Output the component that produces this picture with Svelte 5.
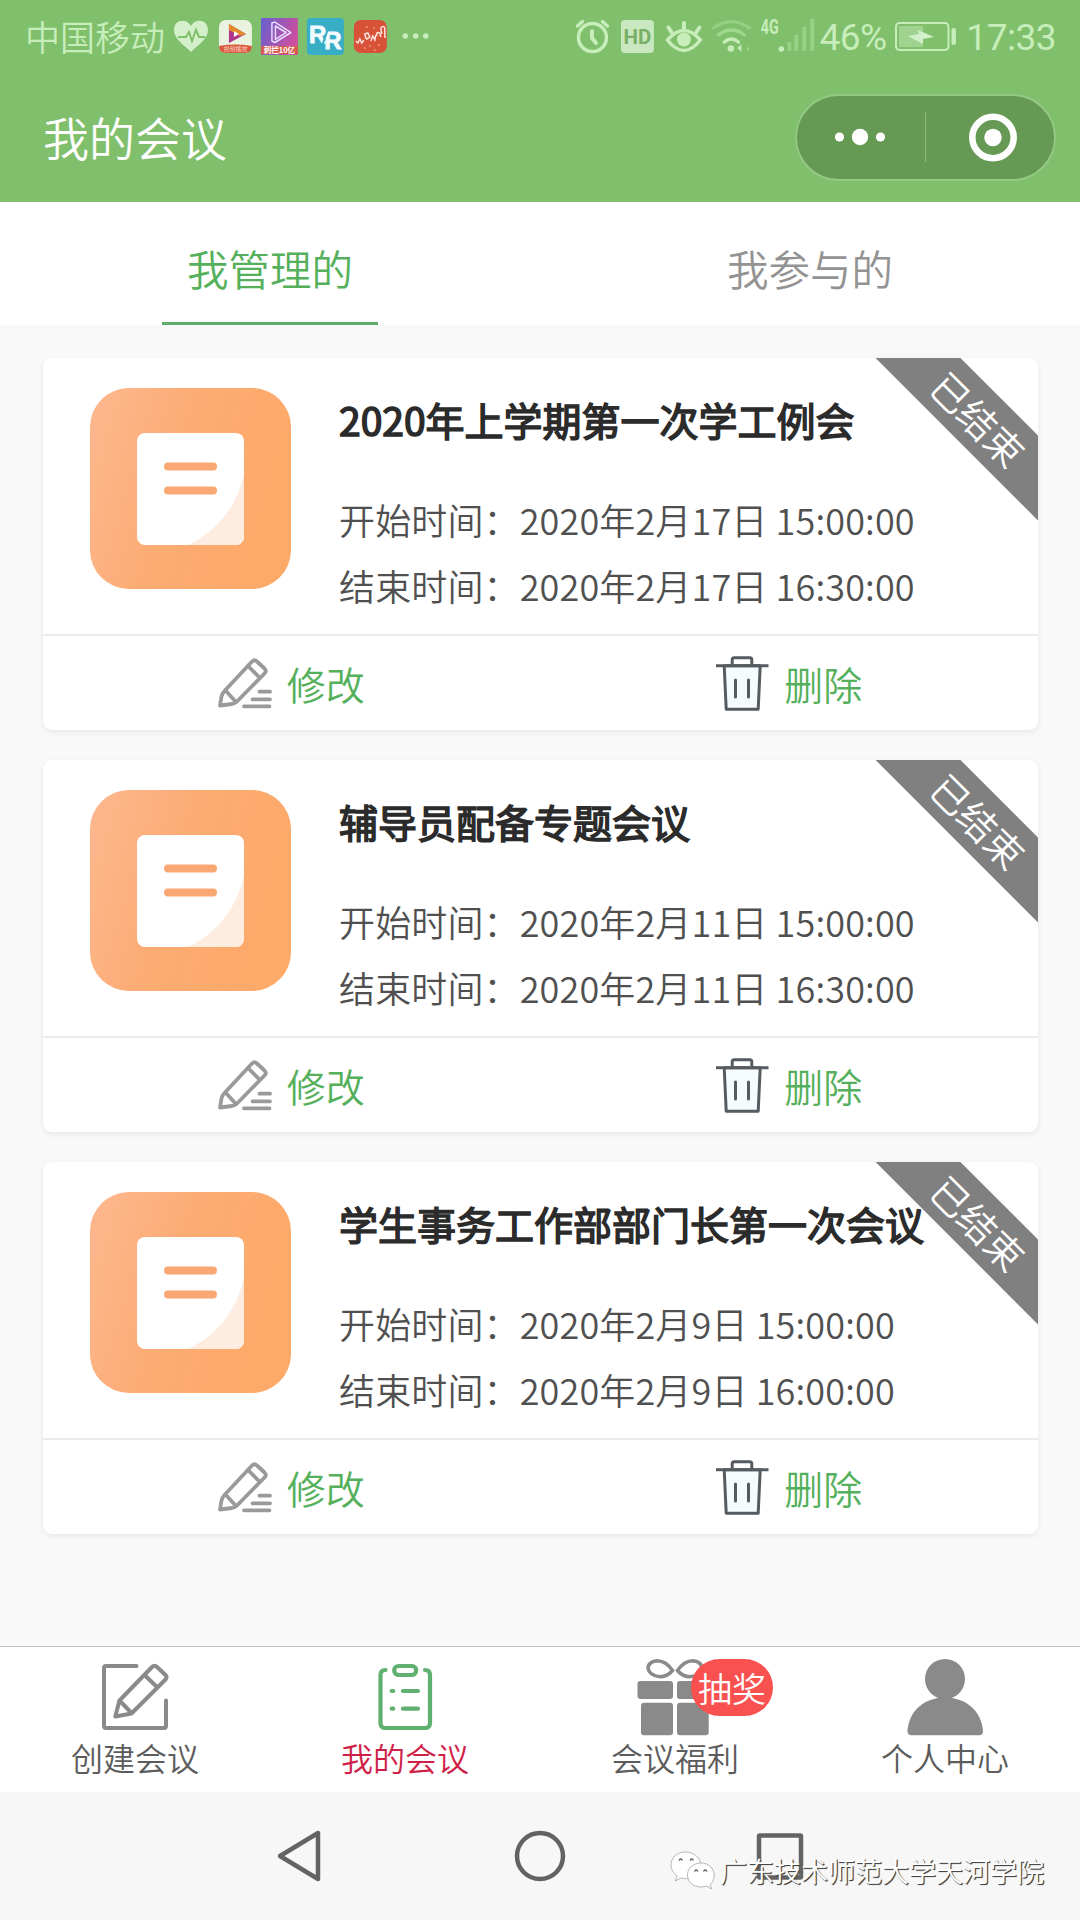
<script lang="ts">
	type Meeting = { title: string, start: string, end: string };

	const tabs = ["我管理的", "我参与的"];
	let activeTab: number = $state(0);

	let meetings: Meeting[] = $state([
		{ title: "2020年上学期第一次学工例会", start: "2020年2月17日 15:00:00", end: "2020年2月17日 16:30:00" },
		{ title: "辅导员配备专题会议", start: "2020年2月11日 15:00:00", end: "2020年2月11日 16:30:00" },
		{ title: "学生事务工作部部门长第一次会议", start: "2020年2月9日 15:00:00", end: "2020年2月9日 16:00:00" }
	]);

	function remove(meeting: Meeting) {
		meetings = meetings.filter(m => m !== meeting);
	}
</script>

<div class="screen">
	<header>
		<div class="status">
			<span class="carrier">中国移动</span>
			<svg class="notifications" width="264" height="48" viewBox="170 12 264 48">
				<path d="M191 52C183 44 174 39 174 30c0-11 13-12 17-4 4-8 17-7 17 4 0 9-9 14-17 22z" fill="#d3f0cb"/>
				<path d="M178 37h8l3-5 3 9 4-11 3 7h6" fill="none" stroke="#80bf6b" stroke-width="2"/>
				<!-- video app -->
				<rect x="219" y="20" width="33" height="33" rx="7" fill="#e9f3e0"/>
				<path d="M219 46q16-3 33 0q0 7-7 7h-19q-7 0-7-7z" fill="#d8583c"/>
				<path d="M229 24l17 10-17 9z" fill="#b0358c"/>
				<path d="M229 24l17 10-6 2-11-6z" fill="#e58a2a"/>
				<path d="M234 31l5 3-5 3z" fill="#fff"/>
				<text x="235.500" y="51.500" font-size="6" text-anchor="middle" fill="#fbd9cf">視頻播放</text>
				<!-- player -->
				<rect x="261" y="18" width="37" height="37" rx="1" fill="url(#player)"/>
				<path d="M261 46h37v8h-37z" fill="#d65a4c"/>
				<path d="M272 23l3-1 16 10.500-16 10-3-1.500zM275.500 26l10.500 6.500-10.500 7z" fill="none" stroke="#e6dcff" stroke-width="1.500" stroke-linejoin="round"/>
				<text x="279.500" y="53" font-size="7.500" font-weight="bold" text-anchor="middle" fill="#fff">刺拦10亿</text>
				<!-- RR -->
				<rect x="307" y="18" width="37" height="37" rx="4" fill="#38adc6"/>
				<g font-family="Liberation Sans, sans-serif" font-weight="bold" font-size="24" fill="#f2fbff" stroke="#f2fbff" stroke-width="0.800">
					<text x="309" y="43">R</text>
					<text x="324.500" y="49">R</text>
				</g>
				<path d="M331 21l-11 31" stroke="#38adc6" stroke-width="2"/>
				<rect x="354" y="20" width="33" height="33" rx="7" fill="#d8523a"/>
				<path d="M356 41l2 2 2-4 2 4 2-3M366 38l-1-4 3-1 2 4-3 2zM371 41l2-5 2 4 1-5M377 36q-1-5 3-3l1 4M382 34l-1-6q3-3 4 0v10" fill="none" stroke="#fce4dc" stroke-width="1.500"/>
				<path d="M364 48h2m3-2h2m3 4h2m2-5h2m-14-18h2m5 1h2" stroke="#ee9a6a" stroke-width="1.500"/>
				<g fill="#c6edba">
					<circle cx="405.500" cy="36" r="2.800"/>
					<circle cx="416" cy="36" r="2.800"/>
					<circle cx="426" cy="36" r="2.800"/>
				</g>
				<defs>
					<linearGradient id="player" x1="0" y1="0" x2="1" y2="0.400">
						<stop offset="0" stop-color="#6460cf"/>
						<stop offset="1" stop-color="#cd4fa0"/>
					</linearGradient>
				</defs>
			</svg>
			<svg class="signals" width="246" height="48" viewBox="574 12 246 48" fill="none" stroke="#c6edba" stroke-linecap="round">
				<circle cx="592.500" cy="37.500" r="14" stroke-width="3.500"/>
				<path d="M592 31v7l4 5" stroke-width="4"/>
				<path d="M577.500 26l5-4.500M607.500 26l-5-4.500" stroke-width="3.500"/>
				<rect x="621" y="20" width="33" height="33" rx="4" fill="#c9e8bf" stroke="none"/>
				<text x="637.500" y="44" font-family="Roboto, sans-serif" font-size="20.500" font-weight="bold" text-anchor="middle" fill="#78ae67" stroke="none">HD</text>
				<path d="M667.500 40q16.500-19 33 0q-16.500 21-33 0z" stroke-width="3.500"/>
				<circle cx="684" cy="39.500" r="7" fill="#c6edba" stroke="none"/>
				<path d="M684 23v6M668.500 27.500l3 4.500M699.500 27.500l-3 4.500" stroke-width="4"/>
				<path d="M713.500 28q18-13 36 0" stroke="#96d182" stroke-width="3.200"/>
				<path d="M718.500 35q13-10 26 0" stroke="#a0d88e" stroke-width="3.200"/>
				<path d="M724.500 42q7-6 14 0" stroke-width="3.500"/>
				<circle cx="731" cy="48.500" r="3.300" fill="#c6edba" stroke="none"/>
				<path d="M741.500 44v8l-4-4z" fill="#c6edba" stroke="none"/>
				<path d="M747 46l3 3-3 3z" fill="#96d182" stroke="none"/>
				<text x="761" y="34" font-family="Roboto, sans-serif" font-size="20" textLength="18" lengthAdjust="spacingAndGlyphs" fill="#c6edba" stroke="none" font-weight="700">4G</text>
				<circle cx="781.500" cy="49" r="2.800" fill="#c6edba" stroke="none"/>
				<path d="M789.500 51v-9M796.500 51v-16M804.500 51v-24M812.500 51v-32" stroke="#98d286" stroke-width="4" stroke-linecap="butt"/>
			</svg>
			<span class="percent">46%</span>
			<svg class="battery" width="64" height="48" viewBox="895 12 64 48">
				<rect x="897" y="23" width="52.500" height="27" rx="3.500" fill="none" stroke="#c6edba" stroke-width="2"/>
				<path d="M900 26h24v21h-24z" fill="#9fd38f"/>
				<path d="M909 36l11-2-1-4 16 7-11 2v5z" fill="#d3f0cb"/>
				<rect x="952.500" y="28" width="4.500" height="17" rx="2" fill="#c6edba"/>
			</svg>
			<span class="clock">17:33</span>
		</div>
		<div class="titlebar">
			<h1>我的会议</h1>
			<div class="capsule">
				<svg width="128" height="50" viewBox="0 0 128 50" fill="#fff">
					<circle cx="42.500" cy="25" r="4.600"/>
					<circle cx="63" cy="25" r="8.200"/>
					<circle cx="83.500" cy="25" r="4.600"/>
				</svg>
				<i></i>
				<svg width="128" height="50" viewBox="0 0 128 50">
					<circle cx="67" cy="25.500" r="20.700" fill="none" stroke="#fff" stroke-width="6.500"/>
					<circle cx="67" cy="25.500" r="8.700" fill="#fff"/>
				</svg>
			</div>
		</div>
	</header>

	<div class="tabs">
		{#each tabs as tab, i}
			<button class:active={activeTab === i} onclick={() => activeTab = i}><span>{tab}</span></button>
		{/each}
	</div>

	<main>
		{#each meetings as meeting}
			<article>
				<div class="info">
					<svg class="doc" width="201" height="201" viewBox="0 0 201 201">
						<defs>
							<linearGradient id="orange" x1="0" y1="0.300" x2="1" y2="0.600">
								<stop offset="0" stop-color="#fdb68b"/>
								<stop offset="0.450" stop-color="#fcab72"/>
								<stop offset="1" stop-color="#fda968"/>
							</linearGradient>
							<clipPath id="paper"><rect x="47" y="45" width="107" height="112" rx="8"/></clipPath>
						</defs>
						<rect width="201" height="201" rx="39" fill="url(#orange)"/>
						<g clip-path="url(#paper)">
							<rect x="47" y="45" width="107" height="112" fill="#fff"/>
							<path d="M154 86q-12 50-56 71h56z" fill="#feece1"/>
						</g>
						<path d="M78 78.500h45M78 102.500h45" stroke="#faa873" stroke-width="8" stroke-linecap="round"/>
					</svg>
					<div class="text">
						<h2>{meeting.title}</h2>
						<p>开始时间：{meeting.start}</p>
						<p>结束时间：{meeting.end}</p>
					</div>
				</div>
				<div class="actions">
					<button>
						<svg width="56" height="56" viewBox="0.500 0 56 56" fill="none" stroke="#9a9a9a" stroke-width="3.800" stroke-linejoin="round" stroke-linecap="round">
							<path d="M3.500 49.500l1.500-9q.5-3 3-5.500L35.500 5.500q2.500-2.500 5 0l7.500 7q2.500 2.500 0 5L20.500 45.500q-2 2-5 2.500z"/>
							<path d="M31.500 10l11 11M9 34.500l10.500 11.500"/>
							<path d="M43 35.700h10.500M36 43.300h17.500M27.500 50.300h25.500"/>
						</svg>
						修改
					</button>
					<button onclick={() => remove(meeting)}>
						<svg width="56" height="56" viewBox="-1.500 0 56 56" fill="none" stroke="#555b60" stroke-width="3" stroke-linejoin="round">
							<path d="M8.700 9.700h36l-2 43.500h-32z" fill="#f6fcfe"/>
							<path d="M0.500 9.700h52.500M16.700 9.700v-6q0-2 2-2h15.600q2 0 2 2v6"/>
							<path d="M20 24v17M33 24v17" stroke-linecap="round"/>
						</svg>
						删除
					</button>
				</div>
				<div class="corner">已结束</div>
			</article>
		{/each}
	</main>

	<footer>
		<a class="item" href="#create">
			<svg width="90" height="80" viewBox="0 0 90 80" fill="none" stroke="#8a8a8a" stroke-width="4" stroke-linecap="round" stroke-linejoin="round">
				<path d="M46.500 9H16q-2 0-2 2v58q0 2 2 2h58q2 0 2-2V43.500"/>
				<path d="M25.300 59.500l4.200-16L62 10q2.500-2.500 5 0l8.500 8q2 2 0 4.500L41.500 56.500z"/>
				<path d="M54.500 18l12.500 12M29.500 43.500l12 12.500"/>
			</svg>
			<span>创建会议</span>
		</a>
		<a class="item current" href="#mine">
			<svg width="90" height="80" viewBox="0 0 90 80" fill="none" stroke="#60b070" stroke-width="4.200" stroke-linecap="round">
				<path d="M25.500 13q-5 0-5 5v48q0 5 5 5h39.500q5 0 5-5V18q0-5-5-5"/>
				<rect x="34.200" y="9" width="22" height="9" rx="4.500"/>
				<path d="M31.700 34h1.500M43 34h15M31.700 51.700h1.500M43 51.700h15"/>
			</svg>
			<span>我的会议</span>
		</a>
		<a class="item" href="#welfare">
			<svg width="90" height="80" viewBox="0 0 90 80" fill="#8a8a8a">
				<rect x="7.500" y="24" width="35.500" height="18" rx="3"/>
				<rect x="47" y="24" width="35.500" height="18" rx="3"/>
				<rect x="11" y="45.700" width="32" height="32.500" rx="3"/>
				<rect x="47" y="45.700" width="31.700" height="32.500" rx="3"/>
				<path d="M42.500 13.500C38 7 32 3.800 27 3.800 14 5 15.500 18.500 30 19.800c6 0 9.500-2.800 12.500-6.300zM47.500 13.500C52 7 58 3.800 63 3.800 76 5 74.500 18.500 60 19.800c-6 0-9.500-2.800-12.500-6.300z" fill="none" stroke="#8a8a8a" stroke-width="3.600"/>
			</svg>
			<span>会议福利</span>
			<b class="badge">抽奖</b>
		</a>
		<a class="item" href="#me">
			<svg width="90" height="80" viewBox="0 0 90 80" fill="#8a8a8a">
				<circle cx="45" cy="22" r="20"/>
				<path d="M7.400 74C9 54 24 40.500 45 40.500S81.400 54 83 74q0 4.300-4 4.300H11.500q-4 0-4.100-4.300z"/>
			</svg>
			<span>个人中心</span>
		</a>
	</footer>

	<nav>
		<svg width="60" height="60" viewBox="0 0 60 60"><path d="M10 30L48 7V53z"/></svg>
		<svg width="60" height="60" viewBox="0 0 60 60"><circle cx="30" cy="30" r="23"/></svg>
		<svg width="60" height="60" viewBox="0 0 60 60"><rect x="9" y="9.500" width="42" height="42" rx="1"/></svg>
		<div class="watermark">
			<svg width="45" height="40" viewBox="0 0 45 40" fill="#fff" stroke="#999" stroke-width="0.700">
				<path d="M15.500 1C7 1 1 7 1 14c0 4.500 2.500 8 6 10.500L5.500 30l5.500-3c10 3 20-3 20-12.500C31 7 24 1 15.500 1z"/>
				<path d="M31 12c-7.500 0-13.500 5-13.500 12S23.500 36 31 36c2 0 4-.5 5.500-1l5 3-1.300-4.500c2.500-2.200 4-5.500 4-9.500C44 17 38 12 31 12z"/>
				<path d="M9 9.500q1.500-3 3.500 0M20 9.500q1.500-3 3.500 0M24.500 20.500q1.500-3 3.500 0M33.500 20.500q1.500-3 3.500 0" fill="none" stroke="#555" stroke-width="1.300"/>
			</svg>
			<span>广东技术师范大学天河学院</span>
		</div>
	</nav>
</div>

<style>
	:global(body) {
		margin: 0;
	}

	.screen {
		display: flex;
		flex-direction: column;
		width: 1080px;
		height: 1920px;
		overflow: hidden;
		background: #f9f9f9;
		font-family: "Noto Sans CJK SC", sans-serif;
		font-weight: 350;
	}

	h1, h2, p {
		margin: 0;
		font-weight: inherit;
	}

	button {
		border: none;
		padding: 0;
		background: none;
		font: inherit;
	}

	header {
		height: 202px;
		background: #80bf6b;
	}

	.status {
		display: flex;
		align-items: center;
		height: 60px;
		padding: 12px 24px 0 25px;
		box-sizing: border-box;
		color: #c6edba;
		line-height: 48px;
		white-space: nowrap;
	}

	.carrier {
		width: 145px;
		font-size: 35px;
	}

	.signals {
		margin-left: 140px;
	}

	.percent, .clock {
		padding-top: 3px;
		font-family: Roboto, sans-serif;
		font-size: 37px;
		font-weight: 400;
		letter-spacing: -0.5px;
	}

	.percent {
		width: 75px;
	}

	.clock {
		margin-left: 8px;
	}

	.titlebar {
		display: flex;
		align-items: center;
		justify-content: space-between;
		height: 88px;
		padding: 33px 24px 0 43px;
	}

	h1 {
		margin-top: -2px;
		color: #fff;
		font-size: 46px;
		line-height: 60px;
	}

	.capsule {
		display: flex;
		align-items: center;
		width: 257px;
		height: 83px;
		border: 2px solid #93c983;
		border-radius: 44px;
		background: #669a54;
	}

	.capsule i {
		width: 1px;
		height: 50px;
		background: #8cb77e;
	}

	.tabs {
		display: flex;
		height: 123px;
		background: #fff;
	}

	.tabs button {
		flex: 1;
		display: flex;
		justify-content: center;
		color: #939393;
		font-size: 41.500px;
	}

	.tabs span {
		width: 216px;
		height: 120px;
		line-height: 133px;
		border-bottom: 3px solid transparent;
	}

	.tabs .active {
		color: #55b05c;
	}

	.tabs .active span {
		border-color: #5fae69;
	}

	main {
		flex: 1;
		display: flex;
		flex-direction: column;
		gap: 30px;
		padding: 33px 42px 0 43px;
	}

	article {
		position: relative;
		flex: none;
		height: 372px;
		border-radius: 9px;
		overflow: hidden;
		background: #fff;
		box-shadow: 0 2px 6px rgba(0, 0, 0, 0.08);
	}

	.info {
		display: flex;
		height: 276px;
		border-bottom: 2px solid #ebebeb;
	}

	.doc {
		flex: none;
		margin: 30px 48px 0 47px;
	}

	.text {
		padding-top: 32px;
		color: #505050;
		font-size: 36px;
		white-space: nowrap;
	}

	h2 {
		margin-bottom: 38px;
		color: #2b2b2b;
		font-size: 39px;
		font-weight: 400;
		line-height: 58px;
		-webkit-text-stroke: 1.5px #2b2b2b;
	}

	p {
		line-height: 66px;
		letter-spacing: 0.14px;
	}

	.actions {
		display: flex;
		height: 94px;
	}

	.actions button {
		flex: 1;
		display: flex;
		align-items: center;
		justify-content: center;
		gap: 14px;
		padding-right: 2px;
		color: #55b05c;
		font-size: 39px;
	}

	.actions svg {
		margin-top: 2px;
	}

	.corner {
		position: absolute;
		top: 30px;
		right: -90px;
		width: 300px;
		height: 60px;
		background: #808080;
		color: #fff;
		font-size: 38px;
		line-height: 60px;
		text-align: center;
		text-indent: 2px;
		transform: rotate(45deg);
	}

	footer {
		display: flex;
		height: 145px;
		border-top: 1px solid #c4c4c4;
		background: #fff;
	}

	.item {
		position: relative;
		flex: 1;
		display: flex;
		flex-direction: column;
		align-items: center;
		padding-top: 10px;
		color: #5c5c5c;
		font-size: 32px;
		line-height: 40px;
		text-decoration: none;
	}

	.current {
		color: #cf2148;
	}

	.badge {
		position: absolute;
		top: 12px;
		left: 151px;
		width: 82px;
		height: 57px;
		border-radius: 29px;
		background: #f9514f;
		color: #fff;
		font-size: 34px;
		font-weight: inherit;
		line-height: 58px;
		text-align: center;
	}

	nav {
		position: relative;
		display: flex;
		justify-content: center;
		gap: 180px;
		height: 94px;
		padding-top: 34px;
		background: #f7f7f7;
	}

	nav > svg {
		fill: none;
		stroke: #636363;
		stroke-width: 4.500;
		stroke-linejoin: round;
	}

	.watermark {
		position: absolute;
		top: 58px;
		left: 670px;
		display: flex;
		align-items: center;
		gap: 5px;
		color: #fff;
		font-size: 27px;
		line-height: 42px;
		white-space: nowrap;
		text-shadow: 1px 1px 1px #444, 1px 1px 0 #666;
	}
</style>
